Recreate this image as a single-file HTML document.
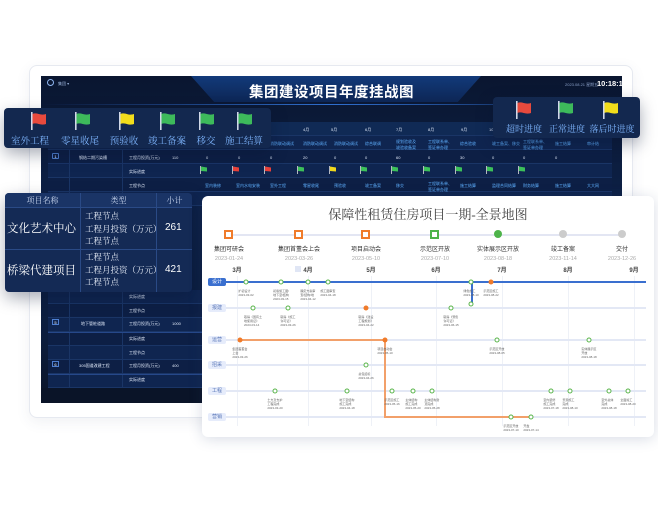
<!DOCTYPE html>
<html><head><meta charset="utf-8"><style>
*{margin:0;padding:0;box-sizing:border-box}
body{width:658px;height:520px;background:#fff;position:relative;overflow:hidden;font-family:"Liberation Sans","Noto Sans CJK SC",sans-serif}
.abs{position:absolute}
.frame{left:29px;top:65px;width:604px;height:353px;border:1px solid #e6e9f0;border-radius:8px;background:#fff;box-shadow:0 4px 14px rgba(60,80,120,.08)}
.dash{left:41px;top:76px;width:581px;height:327px;background:linear-gradient(180deg,#0a1630 0%,#0d2147 40%,#0c1d3d 80%,#0a1428 100%);overflow:hidden}
.t{color:#c9d6ee;font-size:4px;white-space:nowrap;position:absolute}
.row{position:absolute;left:7px;width:564px;height:14px;border-bottom:1px solid #1a3566}
.mc{position:absolute;font-size:4px;color:#5fb0ff;white-space:nowrap}
.wc{position:absolute;font-size:4px;color:#dfe8f8;white-space:nowrap}
.panel{background:#13284f;border-radius:4px;box-shadow:0 6px 16px rgba(10,20,50,.35)}
.fl{position:absolute;text-align:center;font-family:"Liberation Serif","Noto Serif CJK SC",serif;color:#7fb6ff;font-size:9.5px;white-space:nowrap;transform:translateX(-50%)}
.card{left:202px;top:196px;width:452px;height:241px;background:#fff;border-radius:6px;box-shadow:0 2px 14px rgba(40,60,110,.18)}
.lane{position:absolute;left:24px;width:420px;height:2px;background:#e3e8f5}
.lab{position:absolute;left:6px;width:18px;height:8px;background:#e6ecfb;color:#5a77b8;font-size:5px;text-align:center;line-height:8px;border-radius:2px}
.ms{position:absolute;font-size:6px;color:#333;white-space:nowrap;transform:translateX(-50%);text-align:center}
.ms i{display:block;font-style:normal;color:#aaa;font-size:5.5px;margin-top:3px}
.dot{position:absolute;width:5px;height:5px;border-radius:50%;border:1.2px solid #5ab54b;background:#fff;transform:translate(-50%,-50%)}
.od{position:absolute;width:5px;height:5px;border-radius:50%;background:#f07b2a;transform:translate(-50%,-50%)}
.sm{position:absolute;font-size:3px;color:#666;transform:translateX(-50%);white-space:nowrap}
.mo{position:absolute;font-size:6px;font-weight:bold;color:#444;transform:translateX(-50%)}
.vl{position:absolute;width:1px;background:#eef1f7}
</style></head><body>
<div class="abs frame"></div>
<div class="abs dash">
  <div class="abs" style="left:150px;top:0;width:290px;height:26px;background:linear-gradient(180deg,#123a7a,#0d2655);clip-path:polygon(0 0,100% 0,92% 100%,8% 100%)"></div>
  <div class="abs" style="left:0;top:28px;width:581px;height:1px;background:linear-gradient(90deg,transparent,#2f6fd0,transparent)"></div>
  <div class="abs" style="left:0;top:5px;width:581px;text-align:center;color:#fff;font-weight:bold;font-size:14.5px;letter-spacing:.5px">集团建设项目年度挂战图</div>
  <div class="abs" style="left:6px;top:3px;width:7px;height:7px;border-radius:50%;border:1px solid #8fb6f0"></div>
  <div class="t" style="left:17px;top:5px;color:#9fb8e0">集团 ▾</div>
  <div class="t" style="left:524px;top:6px;color:#8aa0c8">2023.08.21 星期五</div>
  <div class="abs" style="left:556px;top:3px;color:#fff;font-size:7.5px;font-weight:bold">10:18:18</div>
  <div class="row" style="top:46px;background:#102a55"></div>
  <div class="row" style="top:60px;background:#0f2550"></div>
  <div class="row" style="top:74px;background:#0d1f45"></div>
  <div class="row" style="top:88px;background:#0f2550"></div>
  <div class="row" style="top:102px;background:#0d1f45"></div>
  <div class="row" style="top:116px;background:#0f2550"></div>
  <div class="row" style="top:214px;background:#0f2550"></div>
  <div class="row" style="top:228px;background:#0d1f45"></div>
  <div class="row" style="top:242px;background:#0f2550"></div>
  <div class="row" style="top:256px;background:#0d1f45"></div>
  <div class="row" style="top:270px;background:#0f2550"></div>
  <div class="row" style="top:284px;background:#0d1f45"></div>
  <div class="row" style="top:298px;background:#0f2550;width:240px"></div>
  <div class="abs" style="left:7px;top:74px;width:22px;height:252px;border-right:1px solid #1a3566"></div>
  <div class="abs" style="left:29px;top:74px;width:53px;height:252px;border-right:1px solid #1a3566"></div>
  <div class="abs" style="left:7px;top:256px;width:243px;height:1px;background:#26488a"></div>
  <div class="abs" style="left:7px;top:298px;width:243px;height:1px;background:#26488a"></div>
  <div class="wc" style="left:262px;top:51px">4月</div><div class="wc" style="left:290px;top:51px">5月</div><div class="wc" style="left:324px;top:51px">6月</div><div class="wc" style="left:355px;top:51px">7月</div><div class="wc" style="left:387px;top:51px">8月</div><div class="wc" style="left:420px;top:51px">9月</div><div class="wc" style="left:448px;top:51px">10</div>
  <div class="mc" style="left:229px;top:65px">消防联动调试</div><div class="mc" style="left:262px;top:65px">消防联动调试</div><div class="mc" style="left:293px;top:65px">消防联动调试</div><div class="mc" style="left:324px;top:65px">综合联调</div><div class="mc" style="left:355px;top:63px">规划验收及<br>竣验收备案</div><div class="mc" style="left:387px;top:63px">工程联系单、<br>签证单办理</div><div class="mc" style="left:419px;top:65px">综合验收</div><div class="mc" style="left:451px;top:65px">竣工备案、移交</div><div class="mc" style="left:482px;top:63px">工程联系单、<br>签证单办理</div><div class="mc" style="left:514px;top:65px">施工结算</div><div class="mc" style="left:546px;top:65px">审计结</div>
  <div class="abs" style="left:11px;top:77px;width:7px;height:6px;border:1px solid #4e7fd0;border-radius:1px;color:#fff;font-size:4px;text-align:center;line-height:5px">1</div>
  <div class="wc" style="left:38px;top:79px">钢结二期污染槽</div>
  <div class="wc" style="left:88px;top:79px">工程月投资(万元)</div><div class="wc" style="left:131px;top:79px">110</div>
  <div class="wc" style="left:165px;top:79px">0</div><div class="wc" style="left:197px;top:79px">0</div><div class="wc" style="left:229px;top:79px">0</div><div class="wc" style="left:262px;top:79px">20</div><div class="wc" style="left:293px;top:79px">0</div><div class="wc" style="left:324px;top:79px">0</div><div class="wc" style="left:355px;top:79px">60</div><div class="wc" style="left:387px;top:79px">0</div><div class="wc" style="left:419px;top:79px">30</div><div class="wc" style="left:451px;top:79px">0</div><div class="wc" style="left:482px;top:79px">0</div><div class="wc" style="left:514px;top:79px">0</div>
  <div class="wc" style="left:88px;top:93px">实际进度</div><div class="wc" style="left:88px;top:107px">工程节点</div>
  <div class="mc" style="left:164px;top:107px">室内装修</div><div class="mc" style="left:195px;top:107px">室内水电安装</div><div class="mc" style="left:229px;top:107px">室外工程</div><div class="mc" style="left:262px;top:107px">零星收尾</div><div class="mc" style="left:293px;top:107px">预验收</div><div class="mc" style="left:324px;top:107px">竣工备案</div><div class="mc" style="left:355px;top:107px">移交</div><div class="mc" style="left:387px;top:105px">工程联系单、<br>签证单办理</div><div class="mc" style="left:419px;top:107px">施工结算</div><div class="mc" style="left:451px;top:107px">监理合同结算</div><div class="mc" style="left:482px;top:107px">财务结算</div><div class="mc" style="left:514px;top:107px">施工结算</div><div class="mc" style="left:546px;top:107px">大大网</div>
  <div class="wc" style="left:88px;top:218px">实际进度</div>
  <div class="wc" style="left:88px;top:232px">工程节点</div>
  <div class="abs" style="left:11px;top:243px;width:7px;height:6px;border:1px solid #4e7fd0;color:#fff;font-size:4px;text-align:center;line-height:5px">5</div>
  <div class="wc" style="left:40px;top:245px">地下管桩道路</div>
  <div class="wc" style="left:88px;top:245px">工程月投资(万元)</div><div class="wc" style="left:131px;top:245px">1000</div>
  <div class="wc" style="left:88px;top:260px">实际进度</div>
  <div class="wc" style="left:88px;top:274px">工程节点</div>
  <div class="abs" style="left:11px;top:285px;width:7px;height:6px;border:1px solid #4e7fd0;color:#fff;font-size:4px;text-align:center;line-height:5px">6</div>
  <div class="wc" style="left:38px;top:287px">305国道改建工程</div>
  <div class="wc" style="left:88px;top:287px">工程月投资(万元)</div><div class="wc" style="left:131px;top:287px">400</div>
  <div class="wc" style="left:88px;top:301px">实际进度</div>
  <div class="abs" style="left:0;top:312px;width:581px;height:15px;background:#0a1428"></div>
</div>
<svg class="abs" style="left:200px;top:166px" width="360" height="10">
<g id="f"><rect x="0" y="0" width="0.8" height="8" fill="#ddd"/><path d="M1 0.5 L7 1.5 L7 5.5 L1 5 Z" fill="#3cc05a"/></g>
<g transform="translate(32 0)"><rect width="0.8" height="8" fill="#ddd"/><path d="M1 .5L7 1.5L7 5.5L1 5Z" fill="#e8413a"/></g><g transform="translate(64 0)"><rect width="0.8" height="8" fill="#ddd"/><path d="M1 .5L7 1.5L7 5.5L1 5Z" fill="#e8413a"/></g>
<use href="#f" x="97"/><g transform="translate(129 0)"><rect width="0.8" height="8" fill="#ddd"/><path d="M1 .5L7 1.5L7 5.5L1 5Z" fill="#f0d81c"/></g>
<use href="#f" x="160"/><use href="#f" x="191"/><use href="#f" x="223"/><use href="#f" x="255"/><use href="#f" x="286"/><use href="#f" x="318"/>
</svg>
<div class="abs panel" style="left:4px;top:108px;width:267px;height:40px"></div>
<svg class="abs" style="left:4px;top:112px" width="267" height="20">
<defs><g id="F"><rect x="0" y="0" width="1.6" height="18" fill="#d0d8e8"/><path d="M1.5 2 C6 0 9 4 15 2 L15 12 C9 14 6 10 1.5 12Z"/></g></defs>
<use href="#F" x="27" fill="#e84a3d"/><use href="#F" x="71" fill="#3dba5b"/><use href="#F" x="115" fill="#f2dd1b"/><use href="#F" x="156" fill="#3dba5b"/><use href="#F" x="195" fill="#3dba5b"/><use href="#F" x="233" fill="#3dba5b"/>
</svg>
<div class="fl" style="left:30px;top:133px">室外工程</div>
<div class="fl" style="left:80px;top:133px">零星收尾</div>
<div class="fl" style="left:124px;top:133px">预验收</div>
<div class="fl" style="left:167px;top:133px">竣工备案</div>
<div class="fl" style="left:206px;top:133px">移交</div>
<div class="fl" style="left:244px;top:133px">施工结算</div>
<div class="abs panel" style="left:493px;top:97px;width:147px;height:41px"></div>
<svg class="abs" style="left:493px;top:101px" width="147" height="20">
<use href="#F" x="23" fill="#e84a3d"/><use href="#F" x="65" fill="#3dba5b"/><use href="#F" x="110" fill="#f2dd1b"/>
</svg>
<div class="fl" style="left:524px;top:122px;font-size:9px">超时进度</div>
<div class="fl" style="left:567px;top:122px;font-size:9px">正常进度</div>
<div class="fl" style="left:612px;top:122px;font-size:9px">落后时进度</div>
<div class="abs panel" style="left:5px;top:193px;width:187px;height:99px;background:#142a55;overflow:hidden">
  <div class="abs" style="left:0;top:0;width:187px;height:15px;background:#1a3466;border-bottom:1px solid #2a4a86"></div>
  <div class="abs" style="left:75px;top:0;width:1px;height:99px;background:#2a4a86"></div>
  <div class="abs" style="left:151px;top:0;width:1px;height:99px;background:#2a4a86"></div>
  <div class="abs" style="left:0;top:56px;width:187px;height:1px;background:#2a4a86"></div>
  <div class="abs" style="left:0;top:2px;width:75px;text-align:center;color:#c9d6ee;font-size:8px;font-family:'Liberation Serif','Noto Serif CJK SC',serif">项目名称</div>
  <div class="abs" style="left:76px;top:2px;width:75px;text-align:center;color:#c9d6ee;font-size:8px;font-family:'Liberation Serif','Noto Serif CJK SC',serif">类型</div>
  <div class="abs" style="left:152px;top:2px;width:35px;text-align:center;color:#c9d6ee;font-size:8px;font-family:'Liberation Serif','Noto Serif CJK SC',serif">小计</div>
  <div class="abs" style="left:2px;top:27px;color:#fff;font-size:11.5px;font-family:'Liberation Serif','Noto Serif CJK SC',serif">文化艺术中心</div>
  <div class="abs" style="left:2px;top:69px;color:#fff;font-size:11.5px;font-family:'Liberation Serif','Noto Serif CJK SC',serif">桥梁代建项目</div>
  <div class="abs" style="left:80px;top:17px;color:#e6ecf7;font-size:8.5px;line-height:12.5px;font-family:'Liberation Serif','Noto Serif CJK SC',serif">工程节点<br>工程月投资（万元）<br>工程节点</div>
  <div class="abs" style="left:80px;top:58px;color:#e6ecf7;font-size:8.5px;line-height:12.5px;font-family:'Liberation Serif','Noto Serif CJK SC',serif">工程节点<br>工程月投资（万元）<br>工程节点</div>
  <div class="abs" style="left:160px;top:29px;color:#fff;font-size:10px">261</div>
  <div class="abs" style="left:160px;top:71px;color:#fff;font-size:10px">421</div>
</div>
<div class="abs card">
  <div class="abs" style="left:0;top:8px;width:452px;text-align:center;font-size:13px;color:#444;font-family:'Liberation Serif','Noto Serif CJK SC',serif">保障性租赁住房项目一期-全景地图</div>
  <div class="abs" style="left:26px;top:38px;width:396px;height:2px;background:#e3e6f3"></div>
  <div class="abs" style="left:22px;top:34px;width:9px;height:9px;border:2px solid #f07b2a;background:#fff"></div>
  <div class="abs" style="left:92px;top:34px;width:9px;height:9px;border:2px solid #f07b2a;background:#fff"></div>
  <div class="abs" style="left:159px;top:34px;width:9px;height:9px;border:2px solid #f07b2a;background:#fff"></div>
  <div class="abs" style="left:228px;top:34px;width:9px;height:9px;border:2px solid #4db34a;background:#fff"></div>
  <div class="abs" style="left:292px;top:34px;width:8px;height:8px;border-radius:50%;background:#4db34a"></div>
  <div class="abs" style="left:357px;top:34px;width:8px;height:8px;border-radius:50%;background:#ccc"></div>
  <div class="abs" style="left:416px;top:34px;width:8px;height:8px;border-radius:50%;background:#ccc"></div>
  <div class="ms" style="left:27px;top:48px">集团可研会<i>2023-01-24</i></div>
  <div class="ms" style="left:97px;top:48px">集团首董会上会<i>2023-03-26</i></div>
  <div class="ms" style="left:164px;top:48px">项目启动会<i>2023-05-10</i></div>
  <div class="ms" style="left:233px;top:48px">示范区开放<i>2023-07-10</i></div>
  <div class="ms" style="left:296px;top:48px">实体展示区开放<i>2023-08-18</i></div>
  <div class="ms" style="left:361px;top:48px">竣工备案<i>2023-11-14</i></div>
  <div class="ms" style="left:420px;top:48px">交付<i>2023-12-26</i></div>
  <div class="mo" style="left:35px;top:69px">3月</div><div class="mo" style="left:106px;top:69px">4月</div><div class="abs" style="left:93px;top:70px;width:6px;height:6px;background:#e0e6f5"></div><div class="mo" style="left:169px;top:69px">5月</div><div class="mo" style="left:234px;top:69px">6月</div><div class="mo" style="left:300px;top:69px">7月</div><div class="mo" style="left:366px;top:69px">8月</div><div class="mo" style="left:432px;top:69px">9月</div>
  <div class="vl" style="left:35px;top:80px;height:150px"></div><div class="vl" style="left:106px;top:80px;height:150px"></div><div class="vl" style="left:169px;top:80px;height:150px"></div><div class="vl" style="left:234px;top:80px;height:150px"></div><div class="vl" style="left:300px;top:80px;height:150px"></div><div class="vl" style="left:366px;top:80px;height:150px"></div><div class="vl" style="left:432px;top:80px;height:150px"></div>
  <div class="lane" style="top:85px;background:#3a6fcf"></div>
  <div class="lane" style="top:111px"></div><div class="lane" style="top:143px"></div><div class="lane" style="top:168px"></div><div class="lane" style="top:194px"></div><div class="lane" style="top:220px"></div>
  <div class="lab" style="top:82px;background:#3a6fcf;color:#fff">设计</div>
  <div class="lab" style="top:108px">报建</div><div class="lab" style="top:140px">运营</div><div class="lab" style="top:165px">招采</div><div class="lab" style="top:191px">工程</div><div class="lab" style="top:217px">营销</div>
  <div class="abs" style="left:36px;top:143px;width:147px;height:2px;background:#f2a06a"></div>
  <div class="abs" style="left:182px;top:143px;width:2px;height:78px;background:#f2a06a"></div>
  <div class="abs" style="left:182px;top:220px;width:146px;height:2px;background:#f2a06a"></div>
  <div class="abs" style="left:269px;top:86px;width:1.5px;height:22px;background:#3a6fcf"></div>
  <div class="dot" style="left:44px;top:86px"></div><div class="dot" style="left:79px;top:86px"></div><div class="dot" style="left:106px;top:86px"></div><div class="dot" style="left:126px;top:86px"></div><div class="dot" style="left:269px;top:86px"></div><div class="od" style="left:289px;top:86px"></div><div class="dot" style="left:269px;top:108px"></div>
  <div class="dot" style="left:51px;top:112px"></div><div class="dot" style="left:86px;top:112px"></div><div class="od" style="left:164px;top:112px"></div><div class="dot" style="left:249px;top:112px"></div>
  <div class="od" style="left:38px;top:144px"></div><div class="od" style="left:183px;top:144px"></div><div class="dot" style="left:295px;top:144px"></div><div class="dot" style="left:387px;top:144px"></div>
  <div class="dot" style="left:164px;top:169px"></div>
  <div class="dot" style="left:73px;top:195px"></div><div class="dot" style="left:145px;top:195px"></div><div class="dot" style="left:190px;top:195px"></div><div class="dot" style="left:211px;top:195px"></div><div class="dot" style="left:230px;top:195px"></div><div class="dot" style="left:349px;top:195px"></div><div class="dot" style="left:368px;top:195px"></div><div class="dot" style="left:407px;top:195px"></div><div class="dot" style="left:426px;top:195px"></div>
  <div class="dot" style="left:309px;top:221px"></div><div class="dot" style="left:329px;top:221px"></div>
  <div class="sm" style="left:44px;top:93px">扩初设计<br>2023-03-02</div><div class="sm" style="left:79px;top:93px">初版施工图/<br>地下室/结构<br>2023-03-15</div><div class="sm" style="left:106px;top:93px">确定方案审<br>查/结构/地<br>2023-04-12</div><div class="sm" style="left:126px;top:93px">施工图审查<br>2023-04-18</div><div class="sm" style="left:269px;top:93px">绿色施工<br>2023-08-10</div><div class="sm" style="left:289px;top:93px">示范区施工<br>2023-08-22</div>
  <div class="sm" style="left:51px;top:119px">取得《国有土<br>地使用证》<br>2023-03-14</div><div class="sm" style="left:86px;top:119px">取得《施工<br>许可证》<br>2023-03-26</div><div class="sm" style="left:164px;top:119px">取得《建设<br>工程规划》<br>2023-04-22</div><div class="sm" style="left:249px;top:119px">取得《预售<br>许可证》<br>2023-06-15</div>
  <div class="sm" style="left:38px;top:151px">集团首董会<br>上会<br>2023-03-26</div><div class="sm" style="left:183px;top:151px">项目启动会<br>2023-05-10</div><div class="sm" style="left:295px;top:151px">示范区开放<br>2023-08-05</div><div class="sm" style="left:387px;top:151px">实体展示区<br>开放<br>2023-08-18</div>
  <div class="sm" style="left:164px;top:176px">总包招标<br>2023-04-26</div>
  <div class="sm" style="left:73px;top:202px">土方及支护<br>工程完成<br>2023-03-20</div><div class="sm" style="left:145px;top:202px">地下室结构<br>施工完成<br>2023-04-18</div><div class="sm" style="left:190px;top:202px">示范区施工<br>2023-05-16</div><div class="sm" style="left:211px;top:202px">主体结构<br>施工完成<br>2023-05-20</div><div class="sm" style="left:230px;top:202px">主体结构封<br>顶完成<br>2023-05-28</div><div class="sm" style="left:349px;top:202px">室内装修<br>施工完成<br>2023-07-18</div><div class="sm" style="left:368px;top:202px">景观施工<br>完成<br>2023-08-10</div><div class="sm" style="left:407px;top:202px">室外总体<br>完成<br>2023-08-18</div><div class="sm" style="left:426px;top:202px">全面竣工<br>2023-08-20</div>
  <div class="sm" style="left:309px;top:228px">示范区开放<br>2023-07-10</div><div class="sm" style="left:329px;top:228px">开盘<br>2023-07-14</div>
</div>
</body></html>
